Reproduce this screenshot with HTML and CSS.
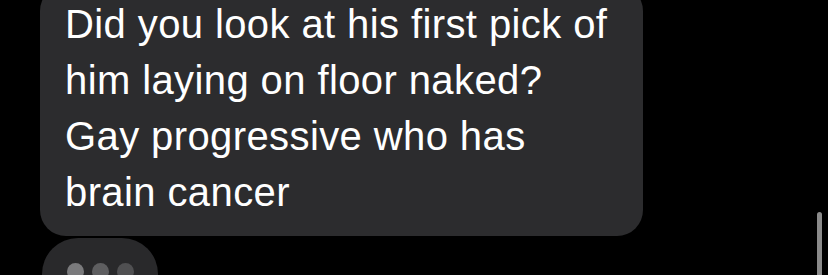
FILE: index.html
```html
<!DOCTYPE html>
<html lang="en">
<head>
  <meta charset="UTF-8">
  <meta name="viewport" content="width=device-width, initial-scale=1.0">
  <title>Messages</title>
  <link rel="stylesheet" href="styles.css">
</head>
<body>
  <div class="thread">
    <div class="bubble">
      <p>Did you look at his first pick of<br>him laying on floor naked?<br>Gay progressive who has<br>brain cancer</p>
    </div>
    <div class="typing">
      <span class="dot one"></span>
      <span class="dot two"></span>
      <span class="dot three"></span>
    </div>
  </div>
  <div class="scrollbar"></div>
</body>
</html>
```

FILE: styles.css
```css
html, body {
  margin: 0;
  height: 100%;
  overflow: hidden;
  background: #000;
}

body {
  font-family: "Liberation Sans", Arial, sans-serif;
  position: relative;
}

.thread {
  display: flex;
  flex-direction: column;
  align-items: flex-start;
  padding-left: 40px;
  margin-top: -15px;
}

.bubble {
  width: 603px;
  box-sizing: border-box;
  background: #2c2c2e;
  border-radius: 26px;
  padding: 11px 20px 16px 25px;
}

.bubble p {
  margin: 0;
  color: #fff;
  font-size: 40px;
  line-height: 56px;
  letter-spacing: 0.4px;
}

.typing {
  margin: 2px 0 0 2px;
  width: 116px;
  height: 72px;
  border-radius: 36px;
  background: #29292b;
  display: flex;
  gap: 8px;
  padding: 25px 0 0 25px;
  box-sizing: border-box;
}

.dot {
  width: 17px;
  height: 17px;
  border-radius: 50%;
}

.dot.one { background: #7a7a7c; }
.dot.two { background: #5e5e60; }
.dot.three { background: #505052; }

.scrollbar {
  position: absolute;
  right: 6px;
  top: 212px;
  width: 5px;
  height: 80px;
  border-radius: 3px;
  background: #8a8a8a;
}
```
